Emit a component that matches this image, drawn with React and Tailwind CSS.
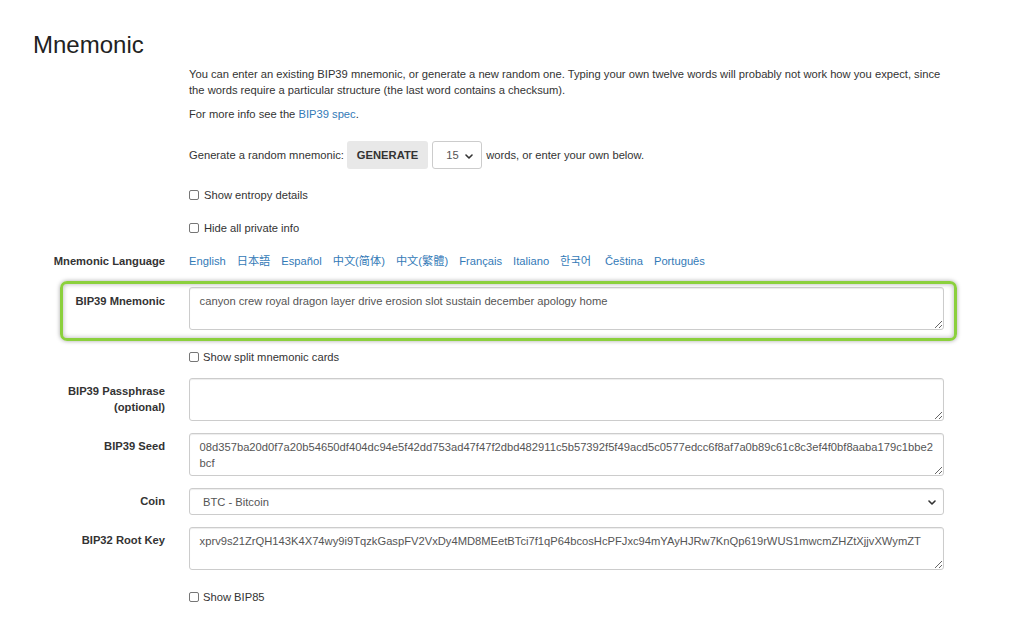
import React from "react";

const font = { fontFamily: '"Liberation Sans", Arial, "Noto Sans CJK SC", "Noto Sans CJK JP", "Noto Sans CJK KR", sans-serif' };

const languages = ["English", "日本語", "Español", "中文(简体)", "中文(繁體)", "Français", "Italiano", "한국어", "Čeština", "Português"];

function Chevron({ className }) {
  return (
    <svg className={className} width="8" height="5" viewBox="0 0 8 5" fill="none">
      <polyline points="1,1 4,4 7,1" stroke="#333" strokeWidth="1.6" strokeLinecap="round" strokeLinejoin="round" />
    </svg>
  );
}

function Box() {
  return <span className="inline-block w-[10px] h-[10px] border border-[#767676] rounded-[2px] bg-white shrink-0"></span>;
}

function Check({ label, gap = "ml-[5px]", className = "" }) {
  return (
    <div className={`ml-[189px] flex items-center h-[16px] ${className}`}>
      <Box />
      <span className={gap}>{label}</span>
    </div>
  );
}

function Area({ value = "" }) {
  return (
    <textarea
      readOnly
      value={value}
      className="block w-[755px] h-[43px] border border-[#ccc] rounded-[3px] px-[9.6px] py-[4.8px] text-[#555] leading-[16px] text-[11.2px] bg-white shadow-[inset_0_1px_1px_rgba(0,0,0,0.075)] outline-none"
    />
  );
}

function Row({ label, children, className = "" }) {
  return (
    <div className={`flex ${className}`}>
      <div className="w-[165px] text-right font-bold pt-[5px] leading-[16px]">{label}</div>
      <div className="ml-[24px]">{children}</div>
    </div>
  );
}

export default function App() {
  return (
    <div style={font} className="min-h-screen bg-white text-[#333] text-[11.2px] leading-[16px] pb-[20px]">
      <h1 className="pl-[33px] pt-[32px] text-[24px] leading-[26px] text-[#222]">Mnemonic</h1>

      <div className="ml-[189px] w-[760px] mt-[7.5px]">
        <p>
          You can enter an existing BIP39 mnemonic, or generate a new random one. Typing your own twelve words will probably not work how you expect, since
          <br />
          the words require a particular structure (the last word contains a checksum).
        </p>
        <p className="mt-[8px]">
          For more info see the <a className="text-[#337ab7]">BIP39 spec</a>.
        </p>
      </div>

      <div className="ml-[189px] mt-[19.5px] flex items-center h-[28px]">
        <span>Generate a random mnemonic:</span>
        <button className="ml-[3px] h-[28px] px-[10px] bg-[#e8e8e8] font-bold rounded-[3px] text-[#333]">GENERATE</button>
        <div className="ml-[4px] relative w-[50px] h-[28px] border border-[#ccc] rounded-[3px] flex items-center pl-[13px]">
          <span className="text-[#555]">15</span>
          <Chevron className="absolute right-[8px] top-[11.5px]" />
        </div>
        <span className="ml-[4px]">words, or enter your own below.</span>
      </div>

      <Check label="Show entropy details" className="mt-[18px]" />
      <Check label="Hide all private info" className="mt-[17px]" />

      <div className="flex mt-[17px] leading-[16px]">
        <div className="w-[165px] text-right font-bold">Mnemonic Language</div>
        <div className="ml-[24px] flex gap-x-[11px] text-[#337ab7]">
          {languages.map((l) => (
            <a key={l} className={l === "한국어" ? "pr-[3px]" : ""}>{l}</a>
          ))}
        </div>
      </div>

      <div className="ml-[60px] mt-[12px] w-[897px] border-[3px] border-[#8bd03d] rounded-[7px] shadow-[0_0_4px_rgba(0,0,0,0.35),inset_0_0_5px_rgba(0,0,0,0.3)] pt-[3px] pb-[8px] flex">
        <div className="w-[102px] text-right font-bold pt-[5.6px]">BIP39 Mnemonic</div>
        <div className="ml-[24px]">
          <Area value="canyon crew royal dragon layer drive erosion slot sustain december apology home" />
        </div>
      </div>

      <Check label="Show split mnemonic cards" gap="ml-[4px]" className="mt-[8px]" />

      <Row
        className="mt-[13px]"
        label={
          <>
            BIP39 Passphrase
            <br />
            (optional)
          </>
        }
      >
        <Area />
      </Row>

      <Row className="mt-[12px]" label="BIP39 Seed">
        <Area value="08d357ba20d0f7a20b54650df404dc94e5f42dd753ad47f47f2dbd482911c5b57392f5f49acd5c0577edcc6f8af7a0b89c61c8c3ef4f0bf8aaba179c1bbe2bcf" />
      </Row>

      <Row className="mt-[12px]" label="Coin">
        <div className="relative w-[755px] h-[27px] border border-[#ccc] rounded-[3px] flex items-center pl-[13px] text-[#555] shadow-[inset_0_1px_1px_rgba(0,0,0,0.075)]">
          BTC - Bitcoin
          <Chevron className="absolute right-[7px] top-[10.5px]" />
        </div>
      </Row>

      <Row className="mt-[12px]" label="BIP32 Root Key">
        <Area value="xprv9s21ZrQH143K4X74wy9i9TqzkGaspFV2VxDy4MD8MEetBTci7f1qP64bcosHcPFJxc94mYAyHJRw7KnQp619rWUS1mwcmZHZtXjjvXWymZT" />
      </Row>

      <Check label="Show BIP85" gap="ml-[4px]" className="mt-[19px]" />
    </div>
  );
}
